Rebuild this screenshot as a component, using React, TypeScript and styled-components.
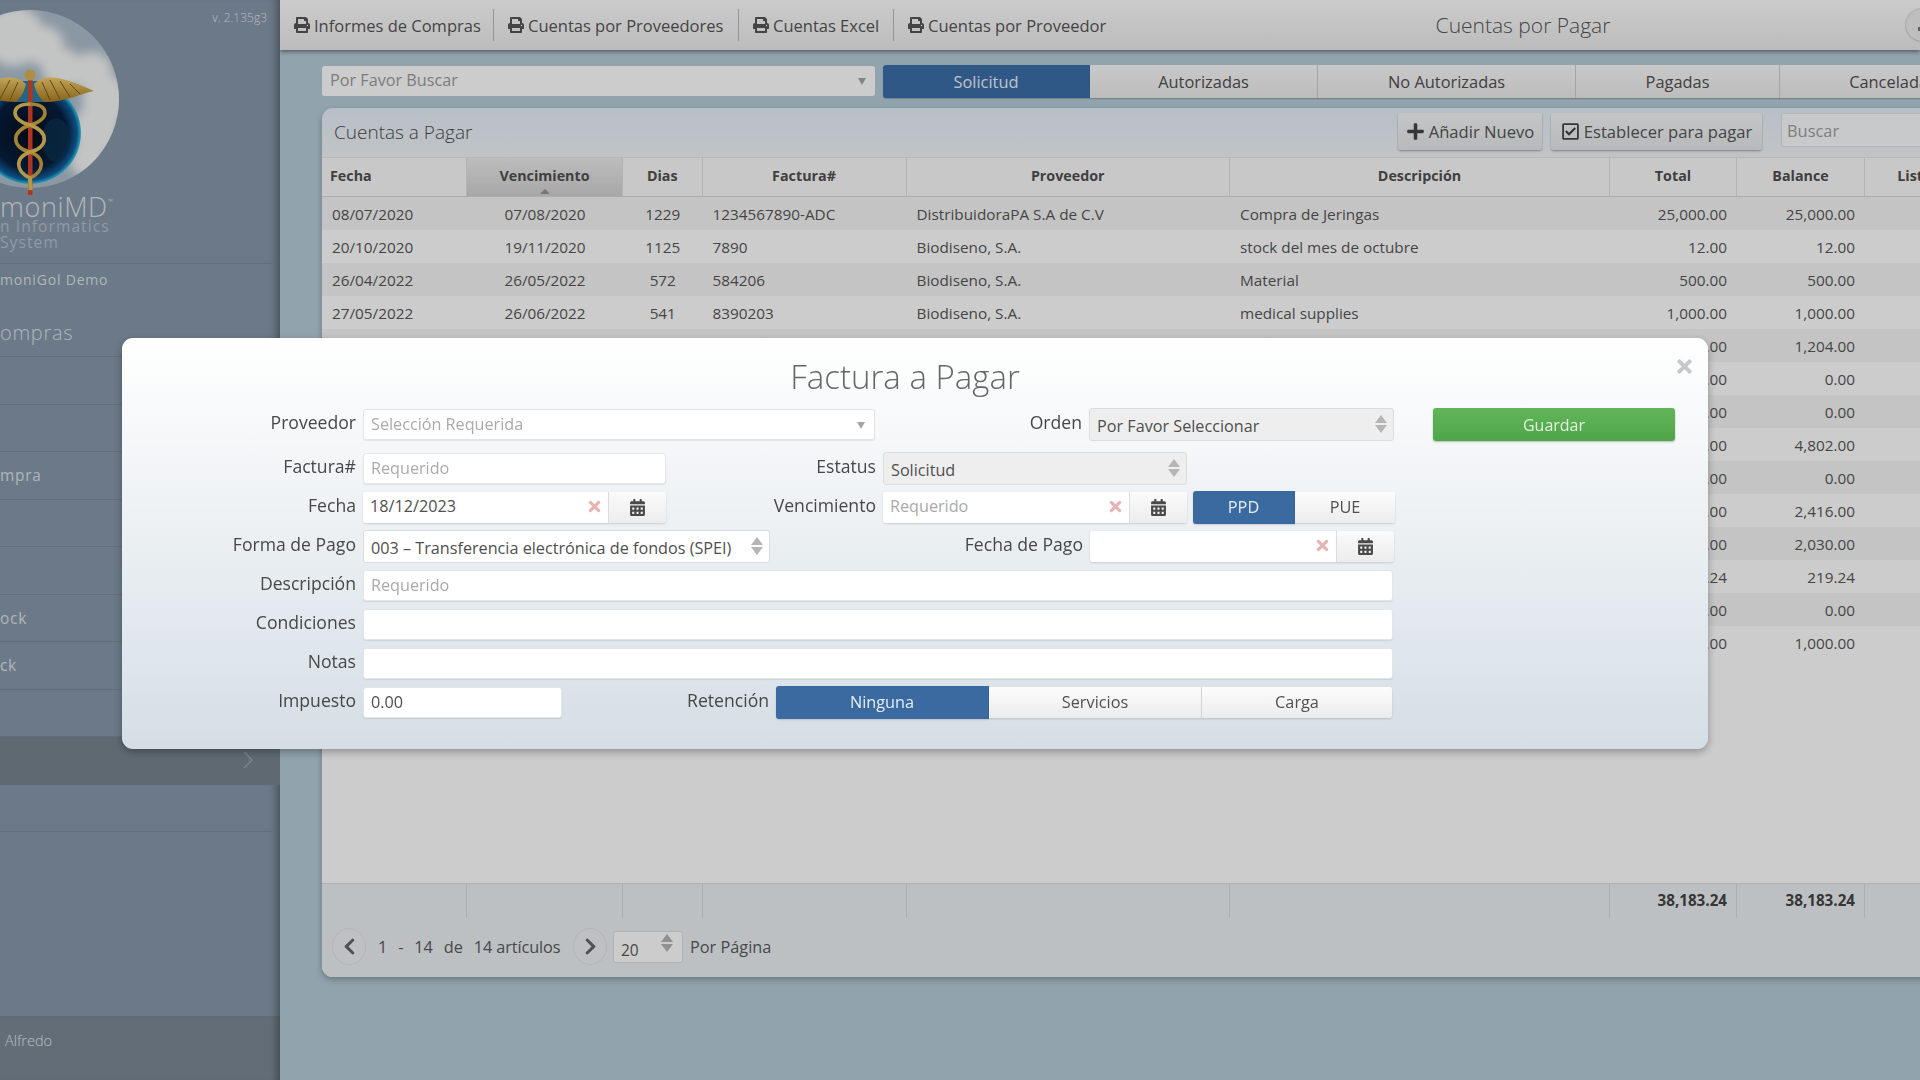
import React from 'react';
import styled, { createGlobalStyle } from 'styled-components';
import {
  FaCalendarAlt,
  FaChevronLeft,
  FaChevronRight,
  FaPlus,
  FaPrint,
  FaRegCheckSquare,
  FaTimes,
} from 'react-icons/fa';

const GlobalStyle = createGlobalStyle`
  html, body { margin: 0; padding: 0; height: 100%; overflow: hidden; }
  body { font-family: "Open Sans", "Liberation Sans", sans-serif; color: #4a4a4a; }
  * { box-sizing: border-box; }
`;

type Row = { fecha?: string; venc?: string; dias?: string; factura?: string; prov?: string; desc?: string; total: string; balance: string };

const rows: Row[] = [
  { fecha: '08/07/2020', venc: '07/08/2020', dias: '1229', factura: '1234567890-ADC', prov: 'DistribuidoraPA S.A de C.V', desc: 'Compra de Jeringas', total: '25,000.00', balance: '25,000.00' },
  { fecha: '20/10/2020', venc: '19/11/2020', dias: '1125', factura: '7890', prov: 'Biodiseno, S.A.', desc: 'stock del mes de octubre', total: '12.00', balance: '12.00' },
  { fecha: '26/04/2022', venc: '26/05/2022', dias: '572', factura: '584206', prov: 'Biodiseno, S.A.', desc: 'Material', total: '500.00', balance: '500.00' },
  { fecha: '27/05/2022', venc: '26/06/2022', dias: '541', factura: '8390203', prov: 'Biodiseno, S.A.', desc: 'medical supplies', total: '1,000.00', balance: '1,000.00' },
  { total: '1,204.00', balance: '1,204.00' },
  { total: '0.00', balance: '0.00' },
  { total: '0.00', balance: '0.00' },
  { total: '4,802.00', balance: '4,802.00' },
  { total: '0.00', balance: '0.00' },
  { total: '2,416.00', balance: '2,416.00' },
  { total: '2,030.00', balance: '2,030.00' },
  { total: '219.24', balance: '219.24' },
  { total: '0.00', balance: '0.00' },
  { total: '1,000.00', balance: '1,000.00' },
];

const menuItems = ['', '', 'mpra', '', '', 'ock', 'ck', ''];

//caduceus over the globe, the left part is cut by the sidebar edge
const Logo = () => (
  <LogoSvg viewBox="0 0 125 195" width="125" height="195">
    <defs>
      <clipPath id="logoClip">
        <circle cx="30" cy="99" r="89" />
      </clipPath>
      <filter id="cloudBlur">
        <feGaussianBlur stdDeviation="5" />
      </filter>
      <radialGradient id="earth" cx="0.5" cy="0.5" r="0.5">
        <stop offset="0" stopColor="#050d1c" />
        <stop offset="0.72" stopColor="#071f3f" />
        <stop offset="0.92" stopColor="#0f5f9e" />
        <stop offset="1" stopColor="#37c8e2" />
      </radialGradient>
      <linearGradient id="gold" x1="0" y1="0" x2="0" y2="1">
        <stop offset="0" stopColor="#f2cf6c" />
        <stop offset="1" stopColor="#a87c25" />
      </linearGradient>
    </defs>
    <g clipPath="url(#logoClip)">
      <rect x="-60" y="0" width="190" height="195" fill="#aebfcd" />
      <g filter="url(#cloudBlur)" fill="#f4f5f5">
        <circle cx="14" cy="36" r="30" />
        <circle cx="44" cy="46" r="20" />
        <circle cx="62" cy="68" r="20" />
        <circle cx="92" cy="72" r="20" />
        <circle cx="106" cy="100" r="24" />
        <circle cx="96" cy="130" r="24" />
        <circle cx="88" cy="160" r="18" />
      </g>
    </g>
    <circle cx="30" cy="133" r="51" fill="url(#earth)" />
    <ellipse cx="56" cy="140" rx="14" ry="22" fill="#0c3556" opacity="0.7" />
    <path d="M18 81 H42 L46 102 H14 Z" fill="#2f7ea6" />
    <path d="M34 84 C46 72 66 78 94 91 C76 95 66 102 44 102 C38 96 36 92 34 84 Z" fill="url(#gold)" />
    <path d="M26 84 C14 72 -6 78 -34 91 C-16 95 -6 102 16 102 C22 96 24 92 26 84 Z" fill="url(#gold)" />
    <path d="M42 82 L50 100 M50 80 L60 99 M60 81 L70 97 M70 84 L80 94" stroke="#7a5a1a" strokeWidth="1" fill="none" />
    <path d="M18 82 L10 100 M10 80 L0 99" stroke="#7a5a1a" strokeWidth="1" fill="none" />
    <rect x="28" y="78" width="4.5" height="117" fill="#d8442a" />
    <circle cx="30" cy="75" r="5.5" fill="#d9b254" />
    <path d="M30 104 C50 104 50 120 30 125 C10 132 12 148 30 152 C46 158 44 172 30 178 L29 190" stroke="#c9a441" strokeWidth="3.6" fill="none" />
    <path d="M30 104 C10 104 10 120 30 125 C50 132 48 148 30 152 C14 158 16 172 30 178 L31 190" stroke="#e1bf5d" strokeWidth="3.6" fill="none" />
  </LogoSvg>
);

const Spinner = () => (
  <SpinnerBox>
    <ArrowUp />
    <ArrowDown />
  </SpinnerBox>
);

const DateField: React.FC<{ value?: string; placeholder?: string; $w: number }> = ({ value, placeholder, $w }) => (
  <DateGroup $w={$w}>
    <DateInput>
      {value ? <span>{value}</span> : <Placeholder>{placeholder}</Placeholder>}
      <ClearIcon>
        <FaTimes />
      </ClearIcon>
    </DateInput>
    <CalendarBtn>
      <FaCalendarAlt />
    </CalendarBtn>
  </DateGroup>
);

const App: React.FC = () => (
  <Page>
    <GlobalStyle />
    <Sidebar>
      <Version>v. 2.135g3</Version>
      <Logo />
      <Brand>
        moniMD<sup>™</sup>
      </Brand>
      <BrandSub>n Informatics</BrandSub>
      <BrandSub>System</BrandSub>
      <DemoName>moniGol Demo</DemoName>
      <ModuleTitle>ompras</ModuleTitle>
      {menuItems.map((item, i) => (
        <MenuItem key={i}>{item}</MenuItem>
      ))}
      <MenuItem $active>
        <Chevron viewBox="0 0 12 20" width="12" height="20">
          <path d="M2 2 L10 10 L2 18" fill="none" stroke="#9aa5b0" strokeWidth="1.6" />
        </Chevron>
      </MenuItem>
      <MenuItem />
      <UserBar>Alfredo</UserBar>
    </Sidebar>

    <Main>
      <TopBar>
        <TopLink $w={214}>
          <FaPrint />
          Informes de Compras
        </TopLink>
        <TopLink $w={245}>
          <FaPrint />
          Cuentas por Proveedores
        </TopLink>
        <TopLink $w={155}>
          <FaPrint />
          Cuentas Excel
        </TopLink>
        <TopLink $w={226} $last>
          <FaPrint />
          Cuentas por Proveedor
        </TopLink>
        <PageTitle>Cuentas por Pagar</PageTitle>
        <UserCircle>
          <span />
        </UserCircle>
      </TopBar>

      <Content>
        <FilterRow>
          <SearchSelect>
            Por Favor Buscar
            <Caret />
          </SearchSelect>
          <Tabs>
            <Tab $w={207} $active>Solicitud</Tab>
            <Tab $w={228}>Autorizadas</Tab>
            <Tab $w={258}>No Autorizadas</Tab>
            <Tab $w={204}>Pagadas</Tab>
            <Tab $w={226}>Canceladas</Tab>
          </Tabs>
        </FilterRow>

        <Panel>
          <PanelHead>
            <PanelTitle>Cuentas a Pagar</PanelTitle>
            <ToolButton $w={144}>
              <FaPlus />
              Añadir Nuevo
            </ToolButton>
            <ToolButton $w={211}>
              <FaRegCheckSquare />
              Establecer para pagar
            </ToolButton>
            <SearchBox>Buscar</SearchBox>
          </PanelHead>

          <HeadRow>
            <Th $align="left">Fecha</Th>
            <Th $sorted>
              Vencimiento
              <SortArrow />
            </Th>
            <Th>Dias</Th>
            <Th>Factura#</Th>
            <Th>Proveedor</Th>
            <Th>Descripción</Th>
            <Th>Total</Th>
            <Th>Balance</Th>
            <Th>Lista</Th>
          </HeadRow>

          <TableBody>
            {rows.map((r, i) => (
              <BodyRow key={i} $odd={i % 2 === 0}>
                <Td>{r.fecha}</Td>
                <Td $align="center">{r.venc}</Td>
                <Td $align="center">{r.dias}</Td>
                <Td>{r.factura}</Td>
                <Td>{r.prov}</Td>
                <Td>{r.desc}</Td>
                <Td $align="right">{r.total}</Td>
                <Td $align="right">{r.balance}</Td>
                <Td />
              </BodyRow>
            ))}
          </TableBody>

          <FootRow>
            <FootCell />
            <FootCell />
            <FootCell />
            <FootCell />
            <FootCell />
            <FootCell />
            <FootCell>38,183.24</FootCell>
            <FootCell>38,183.24</FootCell>
            <FootCell />
          </FootRow>

          <Pager>
            <PageBtn>
              <FaChevronLeft />
            </PageBtn>
            <PagerText>
              <span>1</span>
              <span>-</span>
              <span>14</span>
              <span>de</span>
              <span>14 artículos</span>
            </PagerText>
            <PageBtn>
              <FaChevronRight />
            </PageBtn>
            <PageSize>
              20
              <Spinner />
            </PageSize>
            <PerPage>Por Página</PerPage>
          </Pager>
        </Panel>
      </Content>
    </Main>

    <Backdrop />

    <Modal>
      <CloseBtn>
        <FaTimes />
      </CloseBtn>
      <ModalTitle>Factura a Pagar</ModalTitle>
      <ModalBody>
        <Form>
          <FirstFormRow>
            <Label $w={241}>Proveedor</Label>
            <TextField $w={512}>
              <Placeholder>Selección Requerida</Placeholder>
              <Caret />
            </TextField>
            <Label $w={214}>Orden</Label>
            <SelectField $w={305} $disabled>
              Por Favor Seleccionar
              <Spinner />
            </SelectField>
          </FirstFormRow>
          <FormRow>
            <Label $w={241}>Factura#</Label>
            <TextField $w={303}>
              <Placeholder>Requerido</Placeholder>
            </TextField>
            <Label $w={217}>Estatus</Label>
            <SelectField $w={304} $disabled>
              Solicitud
              <Spinner />
            </SelectField>
          </FormRow>
          <FormRow>
            <Label $w={241}>Fecha</Label>
            <DateField $w={303} value="18/12/2023" />
            <Label $w={217}>Vencimiento</Label>
            <DateField $w={304} placeholder="Requerido" />
            <Segments $w={202} $left={6}>
              <Segment $w={102} $active>PPD</Segment>
              <Segment $w={100}>PUE</Segment>
            </Segments>
          </FormRow>
          <FormRow>
            <Label $w={241}>Forma de Pago</Label>
            <SelectField $w={407}>
              003 – Transferencia electrónica de fondos (SPEI)
              <Spinner />
            </SelectField>
            <Label $w={320}>Fecha de Pago</Label>
            <DateField $w={304} />
          </FormRow>
          <FormRow>
            <Label $w={241}>Descripción</Label>
            <TextField $w={1030}>
              <Placeholder>Requerido</Placeholder>
            </TextField>
          </FormRow>
          <FormRow>
            <Label $w={241}>Condiciones</Label>
            <TextField $w={1030} />
          </FormRow>
          <FormRow>
            <Label $w={241}>Notas</Label>
            <TextField $w={1030} />
          </FormRow>
          <FormRow>
            <Label $w={241}>Impuesto</Label>
            <TextField $w={199}>0.00</TextField>
            <Label $w={214}>Retención</Label>
            <Segments $w={616}>
              <Segment $w={213} $active>Ninguna</Segment>
              <Segment $w={213}>Servicios</Segment>
              <Segment $w={190}>Carga</Segment>
            </Segments>
          </FormRow>
        </Form>
        <SaveButton>Guardar</SaveButton>
      </ModalBody>
    </Modal>
  </Page>
);

const columns = '145px 156px 79.5px 204px 323.5px 380px 127px 128px 100px';

const Page = styled.div`
  display: flex;
  width: 100%;
  height: 100vh;
  overflow: hidden;
  background: #b6ccd9;
`;

const Sidebar = styled.aside`
  flex: 0 0 280px;
  height: 100vh;
  position: relative;
  overflow: hidden;
  background: #8698aa;
  box-shadow: inset -9px 0 9px -6px rgba(0, 0, 0, 0.35);
`;
const Version = styled.div`
  position: absolute;
  top: 9px;
  right: 13px;
  font-size: 12px;
  font-weight: 300;
  color: #e1e6ea;
`;
const LogoSvg = styled.svg`
  display: block;
`;
const Brand = styled.div`
  font-size: 27px;
  font-weight: 300;
  line-height: 26px;
  height: 24px;
  letter-spacing: 0.6px;
  color: #dfe4e9;
  margin-top: -1px;
  sup {
    font-size: 7px;
    vertical-align: 13px;
    line-height: 0;
  }
`;
const BrandSub = styled.div`
  font-size: 15.5px;
  line-height: 16px;
  letter-spacing: 1.1px;
  color: #b7c1cb;
`;
const DemoName = styled.div`
  height: 49px;
  margin-top: 13px;
  border-top: 1px solid #79899a;
  margin-right: 7px;
  font-size: 14px;
  line-height: 27px;
  padding-top: 2px;
  letter-spacing: 0.8px;
  color: #dde2e7;
`;
const ModuleTitle = styled.div`
  height: 45px;
  border-bottom: 1px solid #79899a;
  margin-right: 7px;
  font-size: 20px;
  font-weight: 300;
  letter-spacing: 0.7px;
  line-height: 42px;
  color: #dde2e7;
`;
const MenuItem = styled.div<{ $active?: boolean }>`
  display: flex;
  align-items: center;
  justify-content: flex-end;
  height: 47.5px;
  margin-right: ${(p) => (p.$active ? 0 : 7)}px;
  padding-right: ${(p) => (p.$active ? 26 : 0)}px;
  border-bottom: 1px solid ${(p) => (p.$active ? 'transparent' : '#79899a')};
  background: ${(p) => (p.$active ? '#77848f' : 'transparent')};
  font-size: 15.5px;
  letter-spacing: 0.7px;
  color: #dde2e7;
  &:not(:empty) {
    justify-content: ${(p) => (p.$active ? 'flex-end' : 'flex-start')};
  }
`;
const Chevron = styled.svg`
  display: block;
`;
const UserBar = styled.div`
  position: absolute;
  left: 0;
  right: 0;
  bottom: 0;
  height: 64px;
  padding: 15px 0 0 5px;
  background: #7c8996;
  box-shadow: inset -9px 0 9px -6px rgba(0, 0, 0, 0.35);
  font-size: 14.5px;
  font-weight: 300;
  color: #e6eaee;
`;

const Main = styled.main`
  flex: 1 1 auto;
  min-width: 0;
  overflow: hidden;
`;
const TopBar = styled.header`
  position: relative;
  z-index: 1;
  display: flex;
  align-items: center;
  height: 50px;
  width: 1640px;
  background: linear-gradient(#ffffff, #ebebeb);
  box-shadow: 0 2px 4px rgba(0, 0, 0, 0.4);
`;
const TopLink = styled.div<{ $w: number; $last?: boolean }>`
  display: flex;
  align-items: center;
  gap: 4px;
  flex: 0 0 auto;
  width: ${(p) => p.$w}px;
  height: 32px;
  padding-left: 14px;
  border-right: ${(p) => (p.$last ? 0 : '1px solid #b9b9b9')};
  font-size: 16.5px;
  color: #555;
  svg {
    font-size: 16px;
  }
`;
const PageTitle = styled.div`
  position: absolute;
  left: 1103px;
  width: 280px;
  text-align: center;
  font-size: 21px;
  font-weight: 300;
  color: #555;
`;
const UserCircle = styled.div`
  position: absolute;
  left: 1626px;
  top: 9px;
  width: 32px;
  height: 32px;
  border-radius: 50%;
  background: #eee;
  box-shadow: 0 0 2px rgba(0, 0, 0, 0.4);
  span {
    position: absolute;
    left: 12px;
    top: 18px;
    width: 5px;
    height: 4px;
    background: #777;
  }
`;
const Content = styled.div`
  padding: 14px 0 0 42px;
`;
const FilterRow = styled.div`
  display: flex;
  align-items: center;
  width: 1650px;
  height: 34px;
`;
const SearchSelect = styled.div`
  position: relative;
  flex: 0 0 553px;
  height: 30px;
  line-height: 29px;
  padding-left: 8px;
  border-radius: 3px;
  background: #fff;
  font-size: 16.2px;
  color: #9c9c9c;
`;
const Caret = styled.i`
  position: absolute;
  right: 9px;
  top: 12px;
  border-style: solid;
  border-width: 7px 4.5px 0;
  border-color: #a5a5a5 transparent transparent;
`;
const Tabs = styled.div`
  display: flex;
  margin-left: 8px;
`;
const Tab = styled.div<{ $w: number; $active?: boolean }>`
  flex: 0 0 auto;
  width: ${(p) => p.$w}px;
  height: 33px;
  line-height: 34px;
  text-align: center;
  font-size: 16.4px;
  color: ${(p) => (p.$active ? '#eef3f8' : '#505050')};
  border-radius: ${(p) => (p.$active ? '3px 0 0 3px' : 0)};
  border-right: 1px solid ${(p) => (p.$active ? 'transparent' : '#d5d5d5')};
  background: ${(p) => (p.$active ? '#3b6fa8' : 'linear-gradient(#fbfbfb, #ececec)')};
  box-shadow: 0 1px 1px rgba(0, 0, 0, 0.2);
`;
const Panel = styled.section`
  width: 1660px;
  height: 869px;
  margin-top: 10px;
  border-radius: 11px 0 0 11px;
  display: flex;
  flex-direction: column;
  overflow: hidden;
  background: linear-gradient(#e6f0f9 0, #f1f5f8 50px, #ffffff 50px);
  box-shadow: 0 3px 6px rgba(0, 0, 0, 0.25);
`;
const PanelHead = styled.div`
  display: flex;
  align-items: center;
  flex: 0 0 49px;
  padding: 0 0 2px 12px;
`;
const PanelTitle = styled.h2`
  flex: 0 0 1064px;
  margin: 0;
  font-size: 19px;
  font-weight: 300;
  color: #4d4d4d;
`;
const ToolButton = styled.div<{ $w: number }>`
  display: flex;
  align-items: center;
  justify-content: center;
  gap: 4px;
  flex: 0 0 auto;
  width: ${(p) => p.$w}px;
  height: 37px;
  margin-right: 9px;
  border-radius: 3px;
  background: linear-gradient(#f5f7f9, #e6e8ea);
  box-shadow: 0 1px 2px rgba(0, 0, 0, 0.35);
  font-size: 16.6px;
  color: #555;
  svg {
    font-size: 19px;
    color: #444;
  }
`;
const SearchBox = styled.div`
  flex: 0 0 auto;
  width: 180px;
  height: 34px;
  line-height: 34px;
  margin-left: 10px;
  margin-top: -3px;
  padding-left: 5px;
  border: 1px solid #dfe3e6;
  border-radius: 3px;
  background: #fbfcfd;
  font-size: 16.4px;
  color: #a0a0a0;
`;
const HeadRow = styled.div`
  display: grid;
  grid-template-columns: ${columns};
  flex: 0 0 40px;
  background: #fbfbfb;
  border-top: 1px solid #e6e6e6;
  border-bottom: 1px solid #d8d8d8;
`;
const Th = styled.div<{ $align?: string; $sorted?: boolean }>`
  position: relative;
  line-height: 36px;
  padding: 0 8px;
  text-align: ${(p) => p.$align || 'center'};
  font-size: 14.3px;
  font-weight: 700;
  color: #505050;
  border-right: 1px solid #e0e0e0;
  background: ${(p) => (p.$sorted ? 'linear-gradient(#ececec, #d2d2d2)' : 'transparent')};
`;
const SortArrow = styled.i`
  position: absolute;
  left: 50%;
  bottom: 2px;
  margin-left: -5px;
  border-style: solid;
  border-width: 0 5px 5px;
  border-color: transparent transparent #969696;
`;
const TableBody = styled.div`
  flex: 1 1 auto;
  background: #fff;
`;
const BodyRow = styled.div<{ $odd: boolean }>`
  display: grid;
  grid-template-columns: ${columns};
  height: 33px;
  background: ${(p) => (p.$odd ? '#f6f6f6' : '#ffffff')};
`;
const Td = styled.div<{ $align?: string }>`
  padding: 0 10px;
  line-height: 35px;
  text-align: ${(p) => p.$align || 'left'};
  font-size: 15.3px;
  color: #575757;
  white-space: nowrap;
`;
const FootRow = styled.div`
  display: grid;
  grid-template-columns: ${columns};
  flex: 0 0 35px;
  border-top: 1px solid #dcdfe2;
  background: #ebf0f4;
`;
const FootCell = styled.div`
  padding-right: 9px;
  line-height: 32px;
  text-align: right;
  font-size: 15.2px;
  font-weight: 700;
  color: #444;
  border-right: 1px solid #d8dcdf;
`;
const Pager = styled.div`
  display: flex;
  align-items: center;
  flex: 0 0 59px;
  padding: 0 0 2px 10px;
  background: #ebf0f4;
  font-size: 16.3px;
  color: #5a5a5a;
`;
const PageBtn = styled.div`
  display: flex;
  align-items: center;
  justify-content: center;
  flex: 0 0 34px;
  height: 37px;
  border-radius: 50%;
  border: 1px solid #dfe3e6;
  background: #eef1f4;
  color: #666;
  font-size: 19px;
`;
const PagerText = styled.div`
  display: flex;
  gap: 11px;
  margin: 0 12px;
  width: 183px;
  letter-spacing: -0.1px;
`;

const SpinnerBox = styled.span`
  position: absolute;
  right: 6px;
  top: 6px;
  display: flex;
  flex-direction: column;
  gap: 2px;
`;
const ArrowUp = styled.i`
  border-style: solid;
  border-width: 0 6px 8px;
  border-color: transparent transparent #b5b5b5;
`;
const ArrowDown = styled.i`
  border-style: solid;
  border-width: 8px 6px 0;
  border-color: #b5b5b5 transparent transparent;
`;
const PageSize = styled.div`
  position: relative;
  flex: 0 0 70px;
  height: 32px;
  line-height: 37px;
  margin-left: 6px;
  padding-left: 7px;
  border: 1px solid #dde1e4;
  border-radius: 3px;
  background: #fff;
  font-size: 15.5px;
  ${SpinnerBox} {
    top: 2px;
    right: 9px;
  }
`;
const PerPage = styled.div`
  margin-left: 7px;
`;

const Backdrop = styled.div`
  position: fixed;
  inset: 0;
  z-index: 5;
  background: rgba(0, 0, 0, 0.2);
`;
const Modal = styled.div`
  position: fixed;
  z-index: 6;
  left: 122px;
  top: 338px;
  width: 1586px;
  height: 411px;
  padding: 14px 20px 0 0;
  border-radius: 11px;
  background: linear-gradient(#ffffff, #f1f4f6 35%, #d5dee6);
  box-shadow: 0 3px 8px rgba(0, 0, 0, 0.3);
`;
const CloseBtn = styled.div`
  position: absolute;
  right: 13px;
  top: 17px;
  font-size: 21px;
  color: #c4c8cc;
`;
const ModalTitle = styled.h1`
  margin: 0 0 8px;
  height: 48px;
  line-height: 50px;
  text-align: center;
  font-size: 33px;
  font-weight: 300;
  color: #666;
`;
const ModalBody = styled.div`
  display: flex;
  align-items: flex-start;
`;
const Form = styled.div`
  flex: 0 0 1272px;
  display: flex;
  flex-direction: column;
  gap: 6px;
`;
const FormRow = styled.div`
  display: flex;
  align-items: center;
  height: 33px;
`;
const FirstFormRow = styled(FormRow)`
  margin-bottom: 5px;
`;
const Label = styled.label<{ $w: number }>`
  flex: 0 0 auto;
  width: ${(p) => p.$w}px;
  padding-right: 7px;
  margin-top: -5px;
  text-align: right;
  font-size: 17.6px;
  color: #474747;
  white-space: nowrap;
`;
const TextField = styled.div<{ $w: number }>`
  position: relative;
  flex: 0 0 auto;
  width: ${(p) => p.$w}px;
  height: 31px;
  line-height: 29px;
  padding-left: 7px;
  border: 1px solid #e3e6e8;
  border-radius: 3px;
  background: #fff;
  box-shadow: 0 1px 1px rgba(0, 0, 0, 0.08);
  font-size: 16.2px;
  color: #4f4f4f;
`;
const Placeholder = styled.span`
  color: #aaa;
`;
const SelectField = styled.div<{ $w: number; $disabled?: boolean }>`
  position: relative;
  flex: 0 0 auto;
  width: ${(p) => p.$w}px;
  height: 33px;
  line-height: 35px;
  padding-left: 7px;
  border: 1px solid #dadcdd;
  border-radius: 3px;
  background: ${(p) => (p.$disabled ? '#eeeeee' : '#ffffff')};
  font-size: 16.2px;
  color: #4f4f4f;
  white-space: nowrap;
`;
const DateGroup = styled.div<{ $w: number }>`
  display: flex;
  flex: 0 0 auto;
  width: ${(p) => p.$w}px;
  height: 31px;
  border-radius: 3px;
  box-shadow: 0 1px 2px rgba(0, 0, 0, 0.15);
`;
const DateInput = styled.div`
  position: relative;
  flex: 1 1 auto;
  line-height: 29px;
  padding-left: 7px;
  border-radius: 3px 0 0 3px;
  background: #fff;
  font-size: 16.2px;
  color: #4f4f4f;
`;
const ClearIcon = styled.span`
  position: absolute;
  right: 5px;
  top: 2px;
  font-size: 17px;
  color: #e8b3b3;
`;
const CalendarBtn = styled.div`
  display: flex;
  align-items: center;
  justify-content: center;
  flex: 0 0 58px;
  border-left: 1px solid #dcdcdc;
  border-radius: 0 3px 3px 0;
  background: linear-gradient(#fbfbfb, #ececec);
  font-size: 17px;
  color: #4a4a4a;
`;
const Segments = styled.div<{ $w: number; $left?: number }>`
  display: flex;
  align-items: center;
  flex: 0 0 auto;
  width: ${(p) => p.$w}px;
  margin-left: ${(p) => p.$left || 0}px;
`;
const Segment = styled.div<{ $w: number; $active?: boolean }>`
  flex: 0 0 auto;
  width: ${(p) => p.$w}px;
  height: ${(p) => (p.$active ? 33 : 31)}px;
  line-height: ${(p) => (p.$active ? 33 : 31)}px;
  text-align: center;
  font-size: 16.3px;
  color: ${(p) => (p.$active ? '#e6eef6' : '#505050')};
  background: ${(p) => (p.$active ? '#3a6a9f' : 'linear-gradient(#fcfcfc, #ececec)')};
  border-right: 1px solid ${(p) => (p.$active ? 'transparent' : '#dcdcdc')};
  border-radius: ${(p) => (p.$active ? '3px 0 0 3px' : 0)};
  box-shadow: 0 1px 2px rgba(0, 0, 0, 0.15);
  &:last-child {
    border-radius: 0 3px 3px 0;
    border-right: 0;
  }
`;
const SaveButton = styled.div`
  flex: 0 0 242px;
  height: 33px;
  margin-left: 38px;
  line-height: 34px;
  text-align: center;
  border-radius: 3px;
  background: linear-gradient(#62b559, #4ea647);
  box-shadow: 0 1px 2px rgba(0, 0, 0, 0.25);
  font-size: 16px;
  color: #e4f2e2;
`;

export default App;
